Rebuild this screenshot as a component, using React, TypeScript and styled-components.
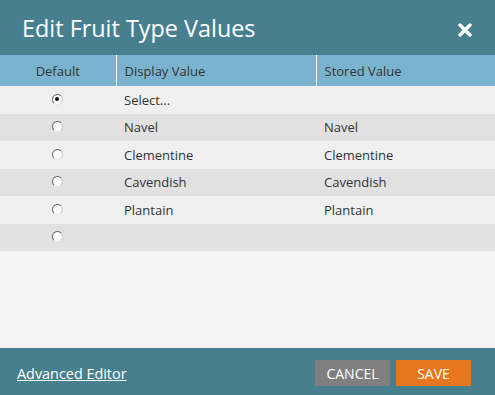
import styled, { createGlobalStyle } from "styled-components"

const GlobalStyle = createGlobalStyle`
  html, body {
    margin: 0;
    padding: 0;
    background: #f4f4f4;
  }
  body {
    font-family: "Open Sans", "Liberation Sans", sans-serif;
  }
`

const Dialog = styled.div`
  width: 495px;
  height: 395px;
  display: flex;
  flex-direction: column;
  background: #f4f4f4;
  overflow: hidden;
`

const TitleBar = styled.div`
  height: 55px;
  flex-shrink: 0;
  background: #477f8f;
  display: flex;
  align-items: center;
  justify-content: space-between;
  padding: 0 22px 0 22px;
`

const Title = styled.h2`
  margin: 0;
  font-size: 23.4px;
  font-weight: 400;
  color: #ffffff;
`

const CloseBtn = styled.button`
  background: none;
  border: 0;
  padding: 0;
  margin-top: 4px;
  width: 16px;
  height: 16px;
  display: flex;
  align-items: center;
  justify-content: center;
  cursor: pointer;
`

const Body = styled.div`
  flex: 1;
`

const Table = styled.table`
  width: 100%;
  border-collapse: collapse;
  table-layout: fixed;
  font-size: 13px;
  color: #333;
`

const HeadCell = styled.th<{ $center?: boolean; $width?: number }>`
  box-sizing: border-box;
  height: 31px;
  padding: 0 8px;
  background: #7ab3cf;
  font-weight: 400;
  text-align: ${p => (p.$center ? "center" : "left")};
  width: ${p => (p.$width ? `${p.$width}px` : "auto")};
  border-right: 1px solid #ffffff;
  &:last-child {
    border-right: 0;
  }
`

const Row = styled.tr<{ $odd: boolean }>`
  height: 27.5px;
  background: ${p => (p.$odd ? "#e1e1e1" : "#f0f0f0")};
`

const Cell = styled.td<{ $center?: boolean }>`
  padding: 0 8px;
  text-align: ${p => (p.$center ? "center" : "left")};
  vertical-align: middle;
`

const Radio = styled.span<{ $checked: boolean }>`
  display: inline-block;
  position: relative;
  top: -2px;
  left: -1px;
  width: 9px;
  height: 9px;
  border-radius: 50%;
  border: 1px solid;
  border-color: #5a5a5a #c8c8c8 #e8e8e8 #6a6a6a;
  background: #fbfbfb;
  vertical-align: middle;
  &::after {
    content: "";
    display: ${p => (p.$checked ? "block" : "none")};
    position: absolute;
    left: 2.5px;
    top: 2.5px;
    width: 4px;
    height: 4px;
    border-radius: 50%;
    background: #111;
  }
`

const Footer = styled.div`
  height: 47px;
  flex-shrink: 0;
  background: #477f8f;
  display: flex;
  align-items: center;
  justify-content: space-between;
  padding: 0 24px 0 17px;
`

const Link = styled.a`
  color: #ffffff;
  font-size: 14.4px;
  text-decoration: underline;
  margin-top: 4px;
  cursor: pointer;
`

const Actions = styled.div`
  display: flex;
  gap: 6px;
  margin-top: 3px;
`

const Button = styled.button<{ $primary?: boolean }>`
  width: 75px;
  height: 26px;
  border: 0;
  padding: 0;
  font-family: inherit;
  font-size: 14px;
  color: #ffffff;
  text-transform: uppercase;
  background: ${p => (p.$primary ? "#e8761d" : "#7f7f7f")};
  cursor: pointer;
`

const rows = [
  { display: "Select...", stored: "", checked: true },
  { display: "Navel", stored: "Navel", checked: false },
  { display: "Clementine", stored: "Clementine", checked: false },
  { display: "Cavendish", stored: "Cavendish", checked: false },
  { display: "Plantain", stored: "Plantain", checked: false },
  { display: "", stored: "", checked: false },
]

export default function App() {
  return (
    <Dialog>
      <GlobalStyle />
      <TitleBar>
        <Title>Edit Fruit Type Values</Title>
        <CloseBtn aria-label="Close">
          <svg width="14" height="14" viewBox="0 0 14 14">
            <path d="M2 2 L12 12 M12 2 L2 12" stroke="#fff" strokeWidth="3.4" strokeLinecap="round" />
          </svg>
        </CloseBtn>
      </TitleBar>
      <Body>
        <Table>
          <thead>
            <tr>
              <HeadCell $center $width={116}>Default</HeadCell>
              <HeadCell $width={200}>Display Value</HeadCell>
              <HeadCell>Stored Value</HeadCell>
            </tr>
          </thead>
          <tbody>
            {rows.map((r, i) => (
              <Row key={i} $odd={i % 2 === 1}>
                <Cell $center>
                  <Radio $checked={r.checked} />
                </Cell>
                <Cell>{r.display}</Cell>
                <Cell>{r.stored}</Cell>
              </Row>
            ))}
          </tbody>
        </Table>
      </Body>
      <Footer>
        <Link>Advanced Editor</Link>
        <Actions>
          <Button>Cancel</Button>
          <Button $primary>Save</Button>
        </Actions>
      </Footer>
    </Dialog>
  )
}
